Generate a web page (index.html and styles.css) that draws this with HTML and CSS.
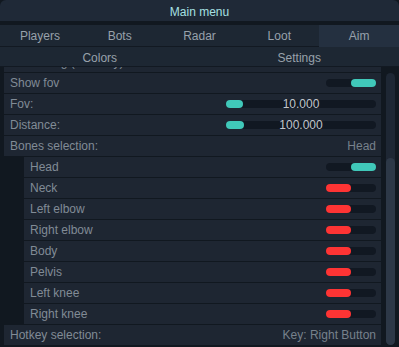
FILE: index.html
```html
<!DOCTYPE html>
<html>
<head>
<meta charset="utf-8">
<link rel="stylesheet" href="styles.css">
</head>
<body>
<div class="window">
  <div class="title">Main menu</div>
  <div class="tabs">
    <div class="tab">Players</div>
    <div class="tab">Bots</div>
    <div class="tab">Radar</div>
    <div class="tab">Loot</div>
    <div class="tab active">Aim</div>
  </div>
  <div class="tabs2">
    <div class="tab">Colors</div>
    <div class="tab">Settings</div>
  </div>
  <div class="content">
    <div class="list">
      <div class="list-inner">
        <div class="row"><span class="label">Smoothing (hold key)</span></div>
        <div class="row"><span class="label">Show fov</span><span class="toggle on"><span class="knob"></span></span></div>
        <div class="row"><span class="label">Fov:</span><span class="slider"><span class="sknob k17"></span><span class="sval">10.000</span></span></div>
        <div class="row"><span class="label">Distance:</span><span class="slider"><span class="sknob k18"></span><span class="sval">100.000</span></span></div>
        <div class="row"><span class="label">Bones selection:</span><span class="value">Head</span></div>
        <div class="row sub"><span class="label">Head</span><span class="toggle on"><span class="knob"></span></span></div>
        <div class="row sub"><span class="label">Neck</span><span class="toggle off"><span class="knob"></span></span></div>
        <div class="row sub"><span class="label">Left elbow</span><span class="toggle off"><span class="knob"></span></span></div>
        <div class="row sub"><span class="label">Right elbow</span><span class="toggle off"><span class="knob"></span></span></div>
        <div class="row sub"><span class="label">Body</span><span class="toggle off"><span class="knob"></span></span></div>
        <div class="row sub"><span class="label">Pelvis</span><span class="toggle off"><span class="knob"></span></span></div>
        <div class="row sub"><span class="label">Left knee</span><span class="toggle off"><span class="knob"></span></span></div>
        <div class="row sub"><span class="label">Right knee</span><span class="toggle off"><span class="knob"></span></span></div>
        <div class="row"><span class="label">Hotkey selection:</span><span class="value">Key: Right Button</span></div>
      </div>
    </div>
    <div class="scroll"><div class="thumb"></div></div>
  </div>
</div>
</body>
</html>
```
FILE: styles.css
```css
html, body {
  margin: 0;
  padding: 0;
  background: #111820;
}
body {
  font-family: "Liberation Sans", Arial, sans-serif;
  font-size: 12px;
  width: 399px;
  height: 347px;
  overflow: hidden;
}
.window {
  width: 399px;
  height: 347px;
  display: flex;
  flex-direction: column;
  background: #111820;
}
.title {
  height: 21px;
  line-height: 24px;
  background: #1f2937;
  border-radius: 6px 6px 0 0;
  color: #a6e0e2;
  text-align: center;
  margin-bottom: 4px;
}
.tabs {
  display: grid;
  grid-template-columns: repeat(5, 1fr);
  height: 21px;
  border-bottom: 1px solid #121922;
  background: #1d2733;
}
.tabs2 {
  display: grid;
  grid-template-columns: 1fr 1fr;
  height: 19px;
  border-bottom: 1px solid #121922;
  background: #1d2733;
}
.tab {
  color: #98a1ab;
  text-align: center;
  line-height: 23px;
}
.tabs2 .tab {
  line-height: 22px;
}
.tab.active {
  background: #243040;
}
.content {
  display: flex;
  height: 280px;
}
.list {
  width: 381px;
  overflow: hidden;
  padding-left: 4px;
  box-sizing: border-box;
}
.list-inner {
  margin-top: -15px;
  display: flex;
  flex-direction: column;
  align-items: flex-end;
  gap: 1px;
}
.row {
  height: 20px;
  width: 377px;
  background: #1e2632;
  display: flex;
  align-items: center;
  justify-content: space-between;
  padding: 0 5px 0 6px;
  box-sizing: border-box;
  flex-shrink: 0;
}
.row.sub {
  width: 357px;
}
.label {
  color: #818b96;
  white-space: nowrap;
}
.value {
  color: #77818c;
}
.toggle {
  width: 50px;
  height: 8px;
  border-radius: 4px;
  background: #111822;
  display: flex;
}
.toggle .knob {
  width: 25px;
  height: 8px;
  border-radius: 4px;
}
.toggle.on {
  justify-content: flex-end;
}
.toggle.on .knob {
  background: #40c8b9;
}
.toggle.off .knob {
  background: #fe3434;
}
.slider {
  position: relative;
  width: 150px;
  height: 8px;
  border-radius: 4px;
  background: #111822;
  display: flex;
}
.sknob {
  height: 8px;
  border-radius: 4px;
  background: #40c8b9;
}
.k17 { width: 17px; }
.k18 { width: 18px; }
.sval {
  position: absolute;
  left: 0;
  right: 0;
  top: -4px;
  line-height: 16px;
  text-align: center;
  color: #c0c5cb;
}
.scroll {
  width: 9px;
  margin: 6px 0 2px 5px;
  background: #1e2734;
  border-radius: 5px;
  display: flex;
  flex-direction: column;
}
.thumb {
  flex: 1;
  margin-top: 85px;
  background: #2d3847;
  border-radius: 5px;
}
```
